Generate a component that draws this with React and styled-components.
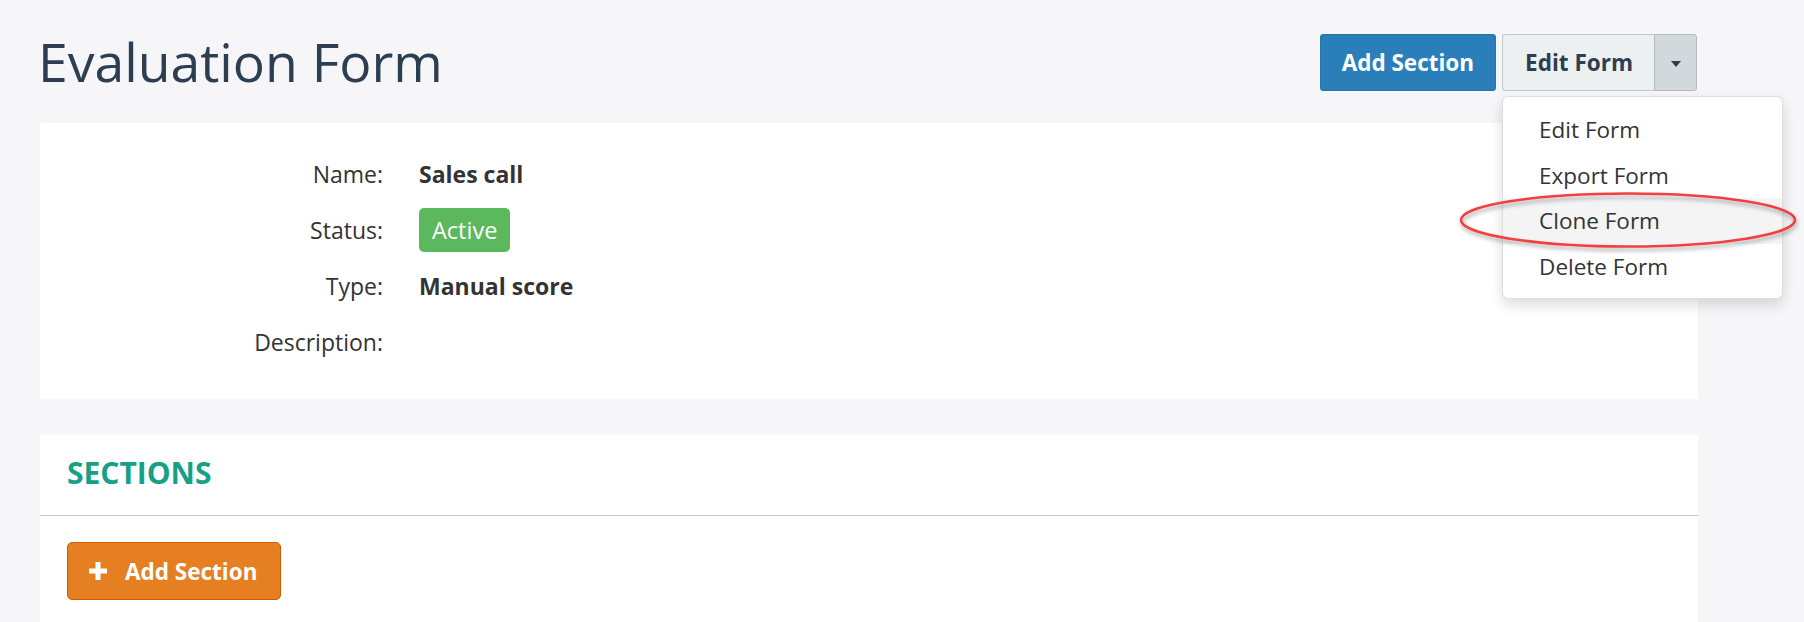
import styled, { createGlobalStyle } from "styled-components";

const GlobalStyle = createGlobalStyle`
  html, body {
    margin: 0;
    padding: 0;
    background: #f6f6f8;
    font-family: "Open Sans", "Noto Sans", "Liberation Sans", sans-serif;
    color: #333;
    overflow: hidden;
  }
`;

const details = [
  { label: "Name:", value: "Sales call" },
  { label: "Status:", badge: "Active" },
  { label: "Type:", value: "Manual score" },
  { label: "Description:", value: "" },
];

const menuItems = ["Edit Form", "Export Form", "Clone Form", "Delete Form"];

const App = () => {
  return (
    <>
      <GlobalStyle />
      <Page>
        <Header>
          <Title>Evaluation Form</Title>
          <Actions>
            <PrimaryButton>Add Section</PrimaryButton>
            <SplitGroup>
              <SplitMain>Edit Form</SplitMain>
              <SplitToggle>
                <Caret />
              </SplitToggle>
              <Menu>
                {menuItems.map((item) => (
                  <MenuItem key={item} $active={item === "Clone Form"}>
                    {item}
                  </MenuItem>
                ))}
                <Marker width="350" height="72" viewBox="0 0 350 72">
                  <defs>
                    <filter id="markShadow" x="-10%" y="-40%" width="120%" height="180%">
                      <feDropShadow dx="1" dy="3" stdDeviation="2" floodColor="#000" floodOpacity="0.35" />
                    </filter>
                  </defs>
                  <ellipse
                    cx="175"
                    cy="35"
                    rx="167"
                    ry="26.5"
                    fill="none"
                    stroke="#f23f3f"
                    strokeWidth="2.6"
                    filter="url(#markShadow)"
                  />
                </Marker>
              </Menu>
            </SplitGroup>
          </Actions>
        </Header>

        <InfoCard>
          <DetailGrid>
            {details.map((row) => (
              <DetailRow key={row.label}>
                <Label>{row.label}</Label>
                <Value>
                  {row.badge ? <Badge>{row.badge}</Badge> : row.value}
                </Value>
              </DetailRow>
            ))}
          </DetailGrid>
        </InfoCard>

        <SectionsCard>
          <SectionsHeader>SECTIONS</SectionsHeader>
          <SectionsBody>
            <AddButton>
              <PlusIcon viewBox="0 0 18 18">
                <rect x="6.5" y="0" width="5" height="18" fill="#fff" />
                <rect x="0" y="6.5" width="18" height="5" fill="#fff" />
              </PlusIcon>
              Add Section
            </AddButton>
          </SectionsBody>
        </SectionsCard>
      </Page>
    </>
  );
};

const Page = styled.div`
  width: 1658px;
  margin-left: 40px;
`;

const Header = styled.header`
  display: flex;
  justify-content: space-between;
  align-items: flex-start;
  height: 123px;
  box-sizing: border-box;
  padding-top: 34px;
  position: relative;
  z-index: 2;
`;

const Title = styled.h1`
  margin: 0 0 0 -2px;
  font-size: 53.5px;
  line-height: 55px;
  font-weight: 400;
  color: #2c3e50;
`;

const Actions = styled.div`
  display: flex;
  gap: 6px;
  margin-right: 1px;
`;

const BaseButton = styled.button`
  font-family: inherit;
  font-size: 22.5px;
  font-weight: 700;
  height: 57px;
  line-height: 55px;
  padding: 0 21px;
  border-radius: 3px;
  white-space: nowrap;
  cursor: pointer;
`;

const PrimaryButton = styled(BaseButton)`
  background: #2a7fba;
  border: 1px solid #2574aa;
  color: #fff;
`;

const SplitGroup = styled.div`
  position: relative;
  display: flex;
`;

const SplitMain = styled(BaseButton)`
  background: #ecf0f1;
  color: #2c3e50;
  border: 1px solid #c3cacd;
  border-right: none;
  border-radius: 3px 0 0 3px;
  padding: 0 21px 0 22px;
`;

const SplitToggle = styled.div`
  width: 43px;
  height: 57px;
  box-sizing: border-box;
  background: #d1d9dc;
  border: 1px solid #b3bcc0;
  border-radius: 0 3px 3px 0;
  display: flex;
  align-items: center;
  justify-content: center;
`;

const Caret = styled.span`
  display: block;
  margin-top: 3px;
  border-top: 6px solid #2c3e50;
  border-left: 5.5px solid transparent;
  border-right: 5.5px solid transparent;
`;

const Menu = styled.div`
  position: absolute;
  top: 62px;
  left: 0;
  width: 281px;
  box-sizing: border-box;
  padding: 10px 0 9px;
  background: #fff;
  border: 1px solid rgba(0, 0, 0, 0.13);
  border-radius: 6px;
  box-shadow: 0 6px 14px rgba(0, 0, 0, 0.14);
`;

const MenuItem = styled.div`
  height: 45.5px;
  line-height: 45.5px;
  padding-left: 36px;
  font-size: 22.5px;
  color: #333;
  background: ${(p) => (p.$active ? "#f4f4f4" : "transparent")};
`;

const Marker = styled.svg`
  position: absolute;
  left: -50px;
  top: 88px;
  pointer-events: none;
  overflow: visible;
`;

const InfoCard = styled.section`
  background: #fff;
  border-radius: 2px;
  padding: 23px 0 29px;
`;

const DetailGrid = styled.div`
  display: flex;
  flex-direction: column;
`;

const DetailRow = styled.div`
  display: grid;
  grid-template-columns: 343px 1fr;
  column-gap: 36px;
  align-items: center;
  height: 56px;
  font-size: 23px;
`;

const Label = styled.div`
  text-align: right;
  color: #333;
`;

const Value = styled.div`
  font-weight: 700;
  color: #333;
`;

const Badge = styled.span`
  display: inline-block;
  background: #5cb85c;
  color: #fff;
  font-weight: 400;
  font-size: 23.5px;
  line-height: 44px;
  padding: 0 13px;
  border-radius: 5px;
`;

const SectionsCard = styled.section`
  margin-top: 35px;
  background: #fff;
  border-radius: 3px 3px 0 0;
  height: 300px;
`;

const SectionsHeader = styled.h2`
  margin: 0;
  padding: 0 0 4px 27px;
  font-size: 30px;
  line-height: 77px;
  font-weight: 700;
  color: #17a085;
  border-bottom: 1px solid #c8c8c8;
`;

const SectionsBody = styled.div`
  padding: 26px 27px;
`;

const AddButton = styled.button`
  display: inline-flex;
  align-items: center;
  gap: 18px;
  height: 58px;
  padding: 0 23px 0 21px;
  font-family: inherit;
  font-size: 22.5px;
  font-weight: 700;
  color: #fff;
  background: #e67f22;
  border: 1px solid #d35b00;
  border-radius: 5px;
  cursor: pointer;
`;

const PlusIcon = styled.svg`
  width: 18px;
  height: 18px;
`;

export default App;
